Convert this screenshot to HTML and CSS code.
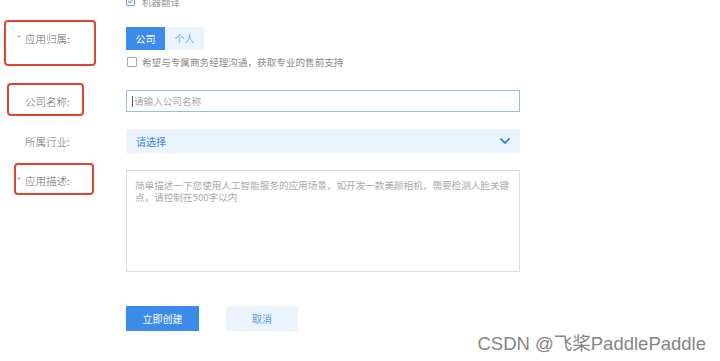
FILE: index.html
```html
<!DOCTYPE html>
<html lang="zh-CN">
<head>
<meta charset="utf-8">
<title>创建应用</title>
<link rel="stylesheet" href="styles.css">
</head>
<body>
<div class="page">
  <div class="form">
    <div class="row row-top">
      <div class="label"></div>
      <div class="field top-check">
        <span class="box box-checked"></span>
        <span class="top-text">机器翻译</span>
      </div>
    </div>

    <div class="row row-owner">
      <div class="label"><span class="req">*</span>应用归属:<span class="mark mark-1"></span></div>
      <div class="field">
        <div class="segment">
          <span class="seg seg-on">公司</span>
          <span class="seg seg-off">个人</span>
        </div>
      </div>
    </div>

    <div class="row row-check">
      <div class="label"></div>
      <div class="field check">
        <span class="box"></span>
        <span class="check-text">希望与专属商务经理沟通，获取专业的售前支持</span>
      </div>
    </div>

    <div class="row row-name">
      <div class="label"><span class="req req-hidden"></span>公司名称:<span class="mark mark-2"></span></div>
      <div class="field">
        <div class="input"><span class="caret"></span><span class="ph">请输入公司名称</span></div>
      </div>
    </div>

    <div class="row row-industry">
      <div class="label"><span class="req req-hidden"></span>所属行业:</div>
      <div class="field">
        <div class="select">
          <span>请选择</span>
          <svg class="chev" width="10" height="6" viewBox="0 0 10 6"><path d="M1 1 L5 5 L9 1" fill="none" stroke="#3a86e0" stroke-width="1.8" stroke-linecap="round" stroke-linejoin="round"/></svg>
        </div>
      </div>
    </div>

    <div class="row row-desc">
      <div class="label label-top"><span class="req">*</span>应用描述:<span class="mark mark-3"></span></div>
      <div class="field">
        <div class="textarea"><div class="ta-line">简单描述一下您使用人工智能服务的应用场景，如开发一款美颜相机，需要检测人脸关键</div><div class="ta-line">点，请控制在500字以内</div></div>
      </div>
    </div>

    <div class="row row-btns">
      <div class="label"></div>
      <div class="field btns">
        <span class="btn btn-primary">立即创建</span>
        <span class="btn btn-light">取消</span>
      </div>
    </div>
  </div>
  <div class="watermark">CSDN @飞桨PaddlePaddle</div>
</div>
</body>
</html>
```

FILE: styles.css
```css
html, body {
  margin: 0;
  padding: 0;
  background: #ffffff;
}

.page {
  position: relative;
  width: 720px;
  height: 361px;
  overflow: hidden;
  font-family: "Noto Sans CJK SC", "Noto Sans", sans-serif;
  font-size: 10px;
  color: #666;
}

.form {
  display: flex;
  flex-direction: column;
}

.row {
  display: flex;
  align-items: center;
}

.label {
  position: relative;
  width: 126px;
  flex: none;
  box-sizing: border-box;
  padding-left: 17px;
  display: flex;
  align-items: center;
  color: #666;
  font-size: 10.5px;
  font-weight: 300;
}

.label-top {
  align-self: flex-start;
  margin-top: 3px;
}

.req {
  display: inline-block;
  width: 8px;
  color: #e25a47;
  font-size: 9px;
}

.req-hidden {
  visibility: hidden;
}

.mark {
  position: absolute;
  border: 2px solid #e0452f;
  border-radius: 4px;
  box-sizing: border-box;
}

.mark-1 { left: 4px; top: -11px; width: 92px; height: 46px; }
.mark-2 { left: 7px; top: -11px; width: 77px; height: 33px; }
.mark-3 { left: 14px; top: -10px; width: 80px; height: 32px; }

.field {
  display: flex;
  align-items: center;
}

/* top clipped checkbox */
.row-top { margin-top: -3px; height: 9px; }
.top-check { gap: 7px; color: #999; font-size: 9.5px; }

.box {
  width: 9px;
  height: 9px;
  border: 1px solid #a8a8a8;
  border-radius: 1px;
  background: #fff;
  box-sizing: border-box;
  flex: none;
}

.box-checked {
  position: relative;
  border-color: #6f9fd8;
}

.box-checked::after {
  content: "";
  position: absolute;
  left: 2px;
  top: 0px;
  width: 2px;
  height: 4px;
  border-right: 1px solid #6f9fd8;
  border-bottom: 1px solid #6f9fd8;
  transform: rotate(45deg);
}

/* owner */
.row-owner { margin-top: 21px; height: 23px; }

.segment {
  display: flex;
}

.seg {
  width: 39px;
  height: 23px;
  display: flex;
  align-items: center;
  justify-content: center;
  font-size: 10px;
}

.seg-on { background: #3d8be8; color: #fff; }
.seg-off { background: #eaf4fe; color: #73a9ee; }

.row-check { margin-top: 7px; height: 10px; }
.check { gap: 5px; margin-left: 1px; }
.check .box { width: 10px; height: 10px; }
.check-text { color: #8a8a8a; font-size: 9.6px; white-space: nowrap; }

/* name input */
.row-name { margin-top: 23px; }

.input {
  width: 394px;
  height: 22px;
  box-sizing: border-box;
  border: 1px solid #9bbbe6;
  background: #fbfdff;
  display: flex;
  align-items: center;
  padding-left: 5px;
}

.caret {
  width: 1px;
  height: 11px;
  background: #555;
  margin-right: 1px;
}

.ph { color: #a8a8a8; font-size: 9.6px; }

/* industry */
.row-industry { margin-top: 17px; }

.select {
  width: 394px;
  height: 24px;
  box-sizing: border-box;
  background: #eaf4fd;
  display: flex;
  align-items: center;
  justify-content: space-between;
  padding: 0 10px 0 10px;
  color: #3a86e0;
  font-size: 10px;
}

/* desc */
.row-desc { margin-top: 17px; align-items: flex-start; }

.textarea {
  width: 394px;
  height: 102px;
  box-sizing: border-box;
  border: 1px solid #dcdcdc;
  padding: 8px 8px;
  color: #aaa;
  font-size: 9.6px;
  white-space: nowrap;
}

.ta-line {
  height: 12px;
  line-height: 12px;
}

/* buttons */
.row-btns { margin-top: 34px; }

.btns { gap: 27px; }

.btn {
  height: 25px;
  display: flex;
  align-items: center;
  justify-content: center;
  font-size: 10px;
}

.btn-primary { width: 73px; background: #3d8be8; color: #fff; }
.btn-light { width: 72px; background: #eaf4fe; color: #5c9ae6; }

.watermark {
  position: absolute;
  right: 14px;
  bottom: 6px;
  font-family: "Liberation Sans", "Noto Sans CJK SC", sans-serif;
  font-size: 18.5px;
  color: #858585;
  text-shadow: 0 0 1px #fff, 0 0 1px #fff;
  white-space: nowrap;
}
```
